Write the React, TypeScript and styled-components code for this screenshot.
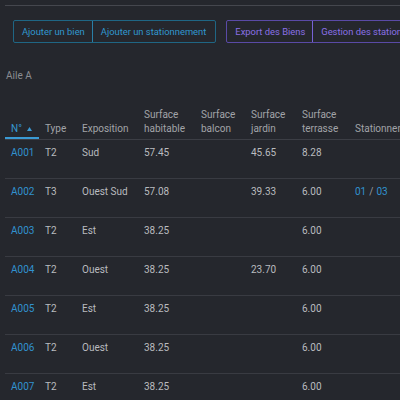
import React from "react";
import styled, { createGlobalStyle } from "styled-components";

const GlobalStyle = createGlobalStyle`
  html, body {
    margin: 0;
    padding: 0;
    background: #25272d;
    overflow: hidden;
  }
  body {
    font-family: Roboto, "Liberation Sans", Arial, sans-serif;
    font-size: 10px;
    color: #b9bbbf;
  }
`;

const Page = styled.div`
  width: 400px;
  height: 400px;
  overflow: hidden;
  padding: 5px 0 0 5px;
  box-sizing: border-box;
`;

const TopRule = styled.div`
  height: 1px;
  background: #45474e;
`;

const Toolbar = styled.div`
  display: flex;
  gap: 10px;
  margin-top: 14px;
  padding-left: 8px;
  white-space: nowrap;
`;

const ButtonGroup = styled.div<{ $tone: "cyan" | "purple" }>`
  display: flex;
  flex-shrink: 0;
  border: 1px solid ${(p) => (p.$tone === "cyan" ? "#1f6684" : "#5a4aa6")};
  border-radius: 2px;
  color: ${(p) => (p.$tone === "cyan" ? "#3197cd" : "#8a70e6")};
  --divider: ${(p) => (p.$tone === "cyan" ? "#2a7fa6" : "#7762d6")};
`;

const GroupButton = styled.div`
  height: 21px;
  line-height: 21px;
  padding: 0 7px 0 8px;
  font-size: 9.4px;
  & + & {
    border-left: 1px solid var(--divider);
    padding-right: 9px;
  }
`;

const SectionLabel = styled.div`
  margin-top: 26px;
  line-height: 14px;
  color: #8b8d92;
  padding-left: 1px;
`;

const Table = styled.table`
  margin-top: 18px;
  border-collapse: separate;
  border-spacing: 0;
  table-layout: fixed;
  width: 440px;
`;

const HeadCell = styled.th<{ $active?: boolean }>`
  text-align: left;
  vertical-align: bottom;
  font-weight: 400;
  line-height: 13.5px;
  padding: 7px 6px 4px 6px;
  color: ${(p) => (p.$active ? "#3597d2" : "#a2a4a8")};
  border-bottom: 1px solid #3c3e45;
  box-shadow: ${(p) => (p.$active ? "inset 0 -2px 0 #3a9ad4" : "none")};
  white-space: nowrap;
`;

const SortMark = styled.span`
  display: inline-flex;
  margin-left: 5px;
  vertical-align: 1px;
`;

const Cell = styled.td`
  line-height: 14px;
  padding: 6px 6px 18px 6px;
  border-bottom: 1px solid #393b42;
  color: #b9bbbf;
  white-space: nowrap;
`;

const Link = styled.span`
  color: #3192cf;
`;

const Slash = styled.span`
  color: #9a9ca0;
  margin: 0 3px;
`;

type Row = {
  id: string;
  type: string;
  expo: string;
  hab: string;
  balcon: string;
  jardin: string;
  terrasse: string;
  park?: [string, string];
};

const rows: Row[] = [
  { id: "A001", type: "T2", expo: "Sud", hab: "57.45", balcon: "", jardin: "45.65", terrasse: "8.28" },
  { id: "A002", type: "T3", expo: "Ouest Sud", hab: "57.08", balcon: "", jardin: "39.33", terrasse: "6.00", park: ["01", "03"] },
  { id: "A003", type: "T2", expo: "Est", hab: "38.25", balcon: "", jardin: "", terrasse: "6.00" },
  { id: "A004", type: "T2", expo: "Ouest", hab: "38.25", balcon: "", jardin: "23.70", terrasse: "6.00" },
  { id: "A005", type: "T2", expo: "Est", hab: "38.25", balcon: "", jardin: "", terrasse: "6.00" },
  { id: "A006", type: "T2", expo: "Ouest", hab: "38.25", balcon: "", jardin: "", terrasse: "6.00" },
  { id: "A007", type: "T2", expo: "Est", hab: "38.25", balcon: "", jardin: "", terrasse: "6.00" },
];

const widths = [34, 37, 62, 57, 50, 51, 53, 96];

export default function App() {
  return (
    <>
      <GlobalStyle />
      <Page>
        <TopRule />
        <Toolbar>
          <ButtonGroup $tone="cyan">
            <GroupButton>Ajouter un bien</GroupButton>
            <GroupButton>Ajouter un stationnement</GroupButton>
          </ButtonGroup>
          <ButtonGroup $tone="purple">
            <GroupButton>Export des Biens</GroupButton>
            <GroupButton>Gestion des stationnements</GroupButton>
          </ButtonGroup>
        </Toolbar>
        <SectionLabel>Aile A</SectionLabel>
        <Table>
          <colgroup>
            {widths.map((w, i) => (
              <col key={i} style={{ width: w }} />
            ))}
          </colgroup>
          <thead>
            <tr>
              <HeadCell $active>
                N°
                <SortMark>
                  <svg width="5" height="4" viewBox="0 0 5 4">
                    <path d="M2.5 0 L5 4 L0 4 Z" fill="#3a9ad4" />
                  </svg>
                </SortMark>
              </HeadCell>
              <HeadCell>Type</HeadCell>
              <HeadCell>Exposition</HeadCell>
              <HeadCell>
                Surface
                <br />
                habitable
              </HeadCell>
              <HeadCell>
                Surface
                <br />
                balcon
              </HeadCell>
              <HeadCell>
                Surface
                <br />
                jardin
              </HeadCell>
              <HeadCell>
                Surface
                <br />
                terrasse
              </HeadCell>
              <HeadCell>Stationnements</HeadCell>
            </tr>
          </thead>
          <tbody>
            {rows.map((r) => (
              <tr key={r.id}>
                <Cell>
                  <Link>{r.id}</Link>
                </Cell>
                <Cell>{r.type}</Cell>
                <Cell>{r.expo}</Cell>
                <Cell>{r.hab}</Cell>
                <Cell>{r.balcon}</Cell>
                <Cell>{r.jardin}</Cell>
                <Cell>{r.terrasse}</Cell>
                <Cell>
                  {r.park ? (
                    <>
                      <Link>{r.park[0]}</Link>
                      <Slash>/</Slash>
                      <Link>{r.park[1]}</Link>
                    </>
                  ) : null}
                </Cell>
              </tr>
            ))}
          </tbody>
        </Table>
      </Page>
    </>
  );
}
